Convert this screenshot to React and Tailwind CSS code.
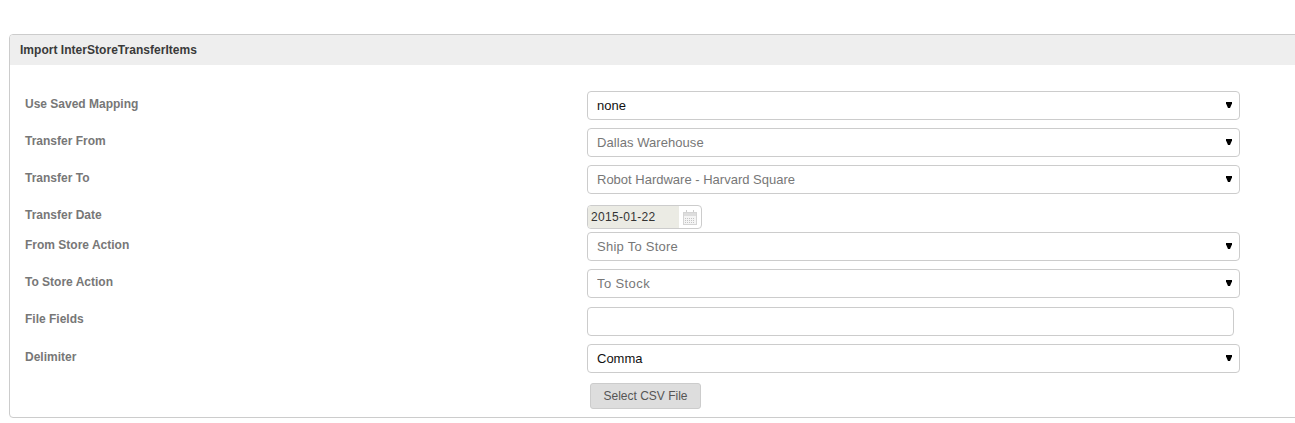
const font = "font-['Liberation_Sans',Arial,sans-serif]";

function Label({ children, className = '' }) {
  return (
    <div className={`w-[577px] shrink-0 pl-[15px] text-[12px] leading-[14px] font-bold text-[#777] ${className}`}>
      {children}
    </div>
  );
}

function Select({ value, dark, tracking = '' }) {
  return (
    <div className="relative w-[653px]">
      <select
        defaultValue={value}
        className={`block h-[29px] w-full appearance-none rounded-[4px] border border-[#ccc] bg-white pl-[9px] text-[13px] outline-none ${tracking} ${dark ? 'text-[#111]' : 'text-[#777]'}`}
      >
        <option>{value}</option>
      </select>
      {/* arrow */}
      <svg className="absolute right-[8px] top-[11px]" width="6" height="6" viewBox="0 0 6 6">
        <path d="M0 0H6V1.5L4 6H2L0 1.5Z" fill="#000" />
      </svg>
    </div>
  );
}

function Row({ label, value, dark, tracking }) {
  return (
    <div className="flex">
      <Label className="pt-[6px]">{label}</Label>
      <Select value={value} dark={dark} tracking={tracking} />
    </div>
  );
}

function CalendarIcon() {
  return (
    <svg width="14" height="15" viewBox="0 0 14 15" fill="none">
      <path d="M3.5 0V3.5M10.5 0V3.5" stroke="#ccc" />
      <rect x="0.5" y="2.5" width="13" height="12" fill="#f4f4f4" stroke="#d4d4d4" />
      <path d="M1 3H13V6H1Z" fill="#ddd" />
      <path d="M2 8.5H12M2 10.5H12M2 12.5H12" stroke="#c4c4c4" strokeDasharray="1 1" />
    </svg>
  );
}

export default function App() {
  return (
    <div className={`h-[423px] overflow-hidden bg-white pl-[9px] pt-[34px] ${font}`}>
      <div className="h-[384px] w-[1320px] overflow-hidden rounded-[4px] border border-[#ccc]">
        <div className="flex h-[30px] items-center bg-[#eee] pl-[10px] text-[12px] font-bold tracking-[0.03px] text-[#3a3a3a]">
          Import InterStoreTransferItems
        </div>

        <div className="flex flex-col pt-[26px]">
          <div className="flex flex-col gap-[8px]">
            <Row label="Use Saved Mapping" value="none" dark />
            <Row label="Transfer From" value="Dallas Warehouse" tracking="tracking-[0.06px]" />
            <Row label="Transfer To" value="Robot Hardware - Harvard Square" />
          </div>

          <div className="mt-[11px] flex">
            <Label className="pt-[3px]">Transfer Date</Label>
            <div className="flex h-[24px] w-[115px] rounded-[4px] border border-[#ccc] bg-white">
              <div className="flex w-[91px] items-center rounded-l-[3px] bg-[#ebebe4] pl-[3px] text-[12px] tracking-[0.3px] text-[#333]">
                2015-01-22
              </div>
              <div className="flex flex-1 items-center justify-center">
                <CalendarIcon />
              </div>
            </div>
          </div>

          <div className="mt-[3px] flex flex-col gap-[8px]">
            <Row label="From Store Action" value="Ship To Store" tracking="tracking-[0.25px]" />
            <Row label="To Store Action" value="To Stock" tracking="tracking-[0.4px]" />
            <div className="mt-[1px] flex">
              <Label className="pt-[5px]">File Fields</Label>
              <input className="block h-[29px] w-[647px] rounded-[4px] border border-[#ccc] bg-white outline-none" />
            </div>
            <Row label="Delimiter" value="Comma" dark />
          </div>

          <div className="mt-[10px] pl-[580px]">
            <button className="h-[26px] w-[111px] rounded-[3px] border border-[#ccc] bg-[#ddd] text-[12px] text-[#555]">
              Select CSV File
            </button>
          </div>
        </div>
      </div>
    </div>
  );
}
